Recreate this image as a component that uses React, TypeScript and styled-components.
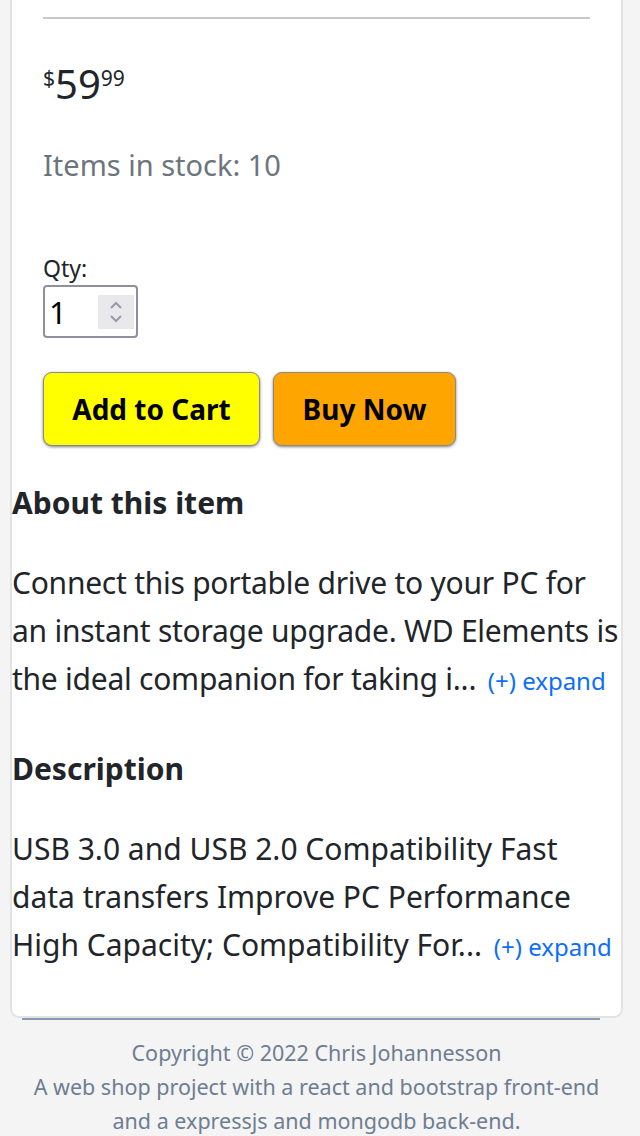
import styled, { createGlobalStyle } from "styled-components";

const GlobalStyle = createGlobalStyle`
  html, body {
    margin: 0;
    padding: 0;
    background: #f4f4f4;
    font-family: "Noto Sans", "Open Sans", sans-serif;
    color: #212529;
    overflow: hidden;
  }
`;

const Page = styled.div`
  padding: 0 17px 0 10px;
`;

const Card = styled.div`
  margin-top: -20px;
  background: #fff;
  border: 2px solid #e3e3e3;
  border-top: none;
  border-radius: 0 0 9px 9px;
  padding: 0 0 45px 0;
`;

const Buy = styled.div`
  padding: 37px 31px 0 31px;
`;

const Rule = styled.hr`
  margin: 0;
  border: none;
  border-top: 2px solid #c8c8c8;
`;

const Price = styled.div`
  margin-top: 45px;
  display: flex;
  align-items: flex-start;
  line-height: 1;
`;

const Sup = styled.span`
  font-size: 21px;
  margin-top: 4px;
`;

const Big = styled.span`
  font-size: 40px;
`;

const Stock = styled.div`
  margin-top: 44px;
  font-size: 29px;
  line-height: 1.2;
  color: #6c757d;
`;

const QtyLabel = styled.div`
  margin-top: 72px;
  font-size: 23px;
  line-height: 1.2;
`;

const QtyBox = styled.div`
  margin-top: 3px;
  width: 85px;
  height: 49px;
  border: 2px solid #8f8f9d;
  border-radius: 4px;
  display: flex;
  align-items: center;
  justify-content: space-between;
  padding: 0 2px 0 4px;
`;

const QtyValue = styled.span`
  font-size: 31px;
  color: #000;
`;

const Spinner = styled.div`
  width: 36px;
  height: 34px;
  background: #e9e9ed;
  display: flex;
  align-items: center;
  justify-content: center;
`;

const Actions = styled.div`
  display: flex;
  gap: 13px;
  margin-top: 34px;
`;

const ActionButton = styled.button<{ $bg: string; $w: number }>`
  width: ${(p) => p.$w}px;
  height: 74px;
  background: ${(p) => p.$bg};
  border: 1px solid #8a8a8a;
  border-radius: 9px;
  box-shadow: 0 1px 3px rgba(0, 0, 0, 0.5);
  font-family: inherit;
  font-weight: 700;
  font-size: 28px;
  color: #000;
  padding: 0;
`;

const Section = styled.section`
  padding: 0;
`;

const Heading = styled.h2<{ $top: number }>`
  margin: ${(p) => p.$top}px 0 0;
  font-size: 30px;
  font-weight: 700;
  line-height: 36px;
`;

const Text = styled.p<{ $tight?: boolean }>`
  margin: 38px 0 0;
  font-size: 30px;
  line-height: 48px;
  letter-spacing: ${(p) => (p.$tight ? "-0.25px" : "0")};
`;

const Expand = styled.a`
  color: #0d6efd;
  font-size: 24px;
  letter-spacing: 0;
  text-decoration: none;
  margin-left: 4px;
`;

const Divider = styled.hr`
  margin: 0 23px 0 12px;
  border: none;
  border-top: 2px solid #8b9ab0;
`;

const Footer = styled.footer`
  padding: 16px 16px 0;
  text-align: center;
  color: #6e7d91;
  font-size: 21.5px;
  line-height: 34px;
`;

export default function App() {
  return (
    <Page>
      <GlobalStyle />
      <Card>
        <Buy>
          <Rule />
          <Price>
            <Sup>$</Sup>
            <Big>59</Big>
            <Sup>99</Sup>
          </Price>
          <Stock>Items in stock: 10</Stock>
          <QtyLabel>Qty:</QtyLabel>
          <QtyBox>
            <QtyValue>1</QtyValue>
            <Spinner>
              <svg width="16" height="26" viewBox="0 0 16 26" fill="none" stroke="#9a9aa6" strokeWidth="2">
                <path d="M3 9 L8 4 L13 9" />
                <path d="M3 17 L8 22 L13 17" />
              </svg>
            </Spinner>
          </QtyBox>
          <Actions>
            <ActionButton $bg="#ffff00" $w={217}>Add to Cart</ActionButton>
            <ActionButton $bg="#ffa500" $w={183}>Buy Now</ActionButton>
          </Actions>
        </Buy>
        <Section>
          <Heading $top={39}>About this item</Heading>
          <Text $tight>
            Connect this portable drive to your PC for an instant storage upgrade. WD Elements is the ideal companion for taking i...{" "}
            <Expand href="#">(+) expand</Expand>
          </Text>
          <Heading $top={46}>Description</Heading>
          <Text>
            USB 3.0 and USB 2.0 Compatibility Fast data transfers Improve PC Performance High Capacity; Compatibility For...{" "}
            <Expand href="#">(+) expand</Expand>
          </Text>
        </Section>
      </Card>
      <Divider />
      <Footer>
        Copyright © 2022 Chris Johannesson
        <br />
        A web shop project with a react and bootstrap front-end and a expressjs and mongodb back-end.
      </Footer>
    </Page>
  );
}
